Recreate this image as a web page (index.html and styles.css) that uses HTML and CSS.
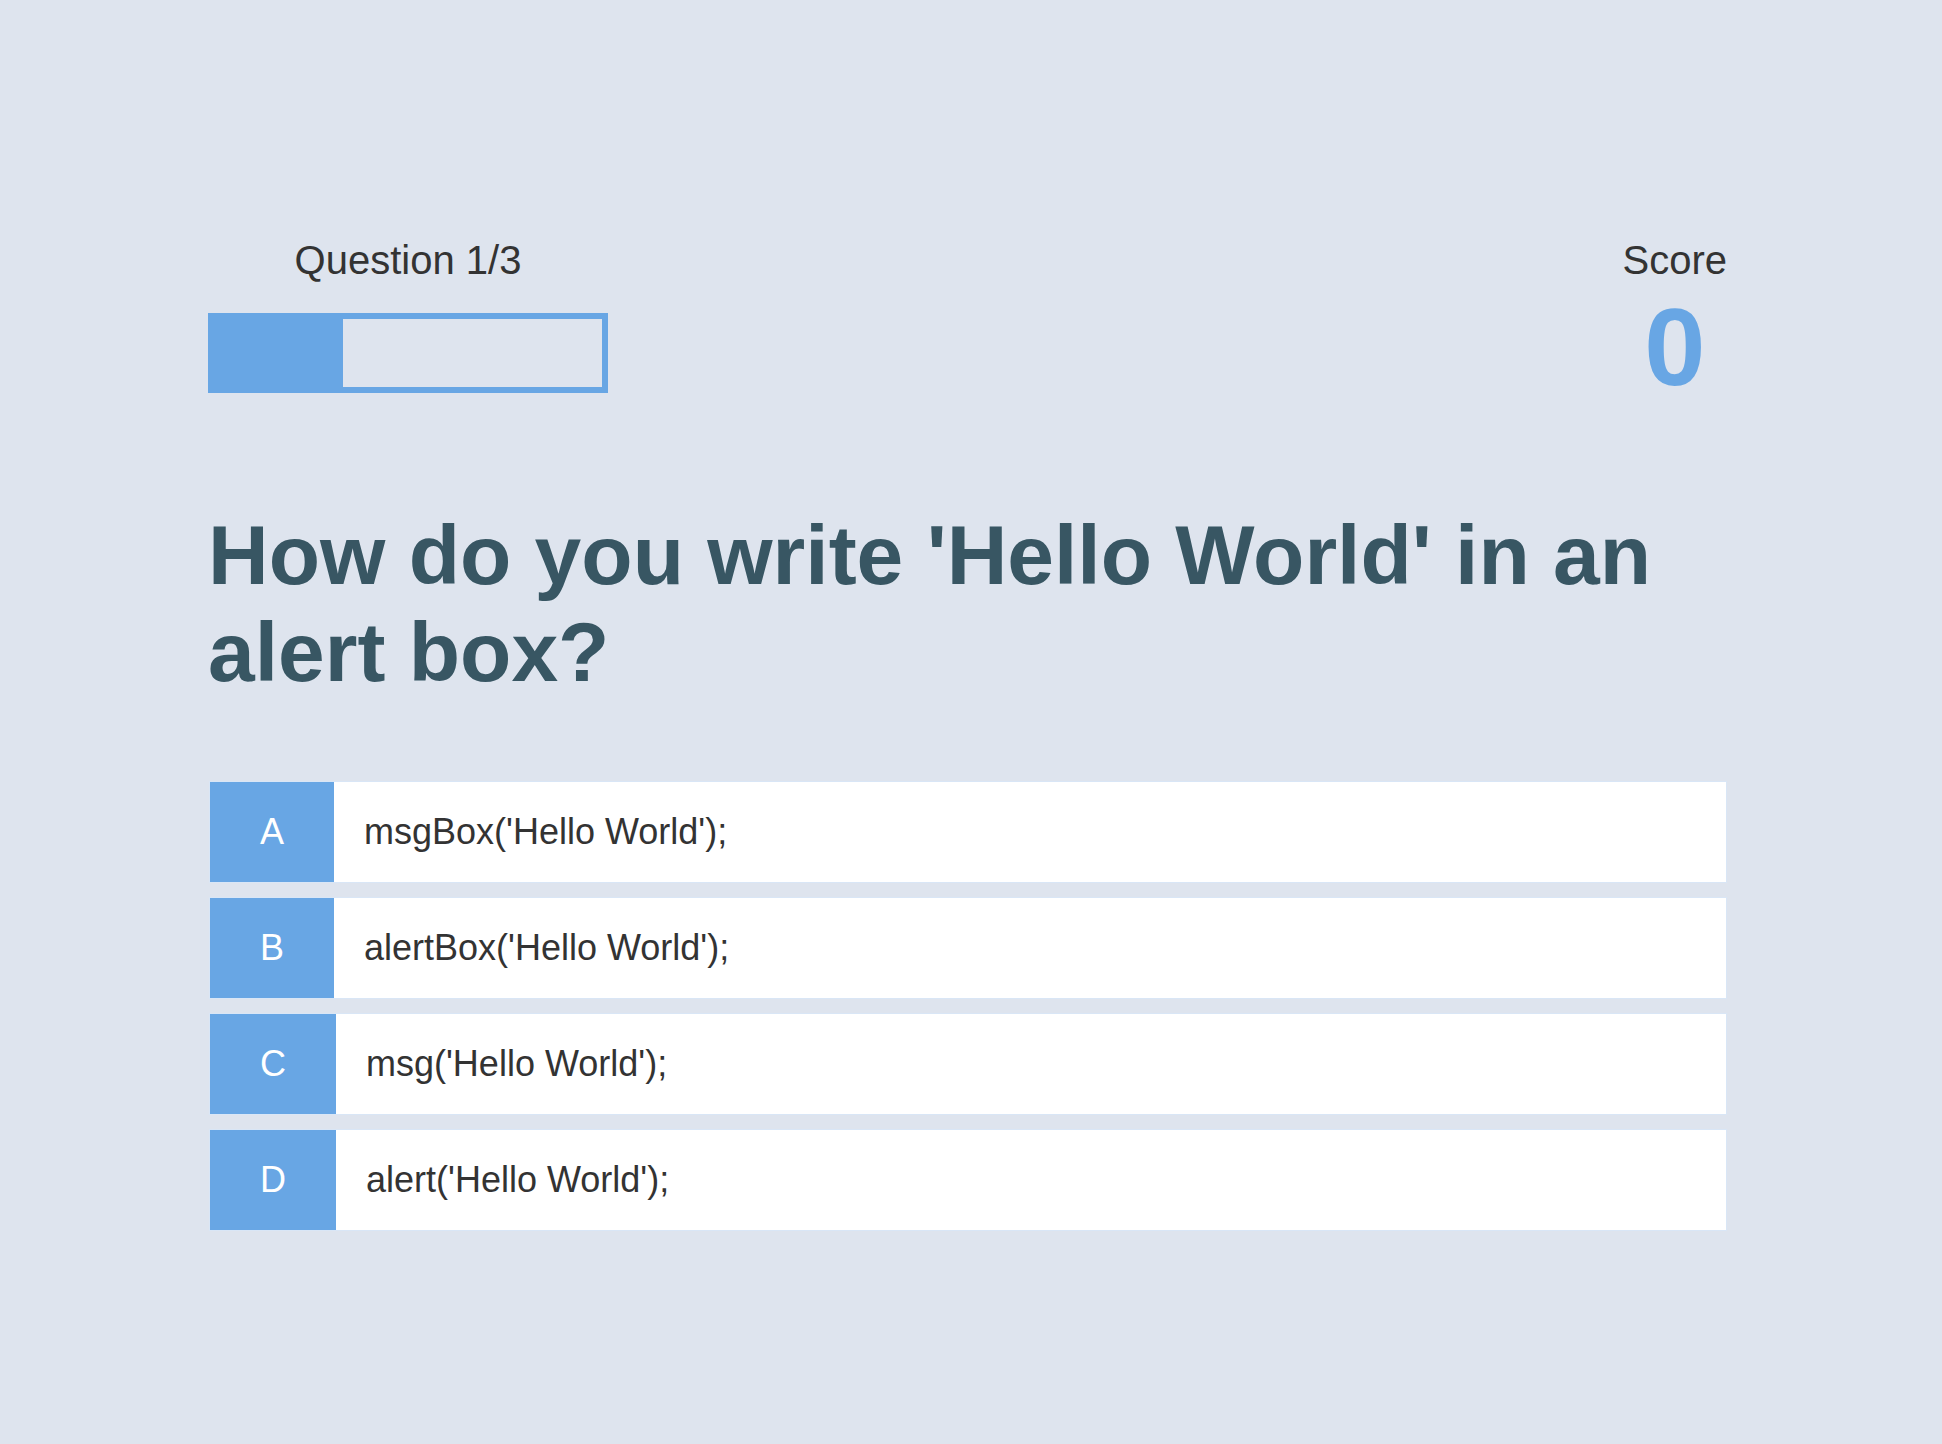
FILE: index.html
```html
<!DOCTYPE html>
<html lang="en">
<head>
<meta charset="utf-8">
<title>Quiz</title>
<link rel="stylesheet" href="styles.css">
</head>
<body>
<div class="container">
  <div class="hud">
    <div class="hud-item">
      <p class="hud-prefix">Question 1/3</p>
      <div class="progress-bar"><div class="progress-fill" style="width: 33.33%"></div></div>
    </div>
    <div class="hud-item">
      <p class="hud-prefix">Score</p>
      <h1 class="hud-main-text">0</h1>
    </div>
  </div>
  <h2 class="question">How do you write 'Hello World' in an alert box?</h2>
  <div class="choices">
    <div class="choice-container"><p class="choice-prefix">A</p><p class="choice-text">msgBox('Hello World');</p></div>
    <div class="choice-container"><p class="choice-prefix">B</p><p class="choice-text">alertBox('Hello World');</p></div>
    <div class="choice-container"><p class="choice-prefix">C</p><p class="choice-text">msg('Hello World');</p></div>
    <div class="choice-container"><p class="choice-prefix">D</p><p class="choice-text">alert('Hello World');</p></div>
  </div>
</div>
</body>
</html>
```
FILE: styles.css
```css
* {
  box-sizing: border-box;
  margin: 0;
  padding: 0;
  font-family: "Liberation Sans", Arial, Helvetica, sans-serif;
  color: #333333;
}

html, body {
  background-color: #dee4ee;
}

body {
  min-height: 1444px;
}

.container {
  width: 1519px;
  margin-left: 208px;
  padding-top: 238px;
}

.hud {
  display: flex;
  justify-content: space-between;
  align-items: flex-start;
}

.hud-item {
  display: flex;
  flex-direction: column;
  align-items: center;
}

.hud-prefix {
  font-size: 40px;
  text-align: center;
}

.progress-bar {
  width: 400px;
  height: 80px;
  margin-top: 30px;
  border: 6px solid #68a6e4;
}

.progress-fill {
  height: 100%;
  background-color: #68a6e4;
}

.hud-main-text {
  font-size: 110px;
  font-weight: bold;
  color: #68a6e4;
  text-align: center;
}

.question {
  margin-top: 97px;
  font-size: 84px;
  line-height: 97px;
  font-weight: bold;
  color: #385663;
}

.choices {
  margin-top: 80px;
  padding-left: 1px;
  display: flex;
  flex-direction: column;
  gap: 14px;
}

.choice-container {
  display: flex;
  height: 102px;
  background-color: #ffffff;
  border: 1px solid #d9e6f6;
  font-size: 36px;
}

.choice-prefix {
  padding: 29px 50px 0;
  background-color: #68a6e4;
  color: #ffffff;
}

.choice-text {
  padding: 29px 30px 0;
  flex: 1;
}
```
